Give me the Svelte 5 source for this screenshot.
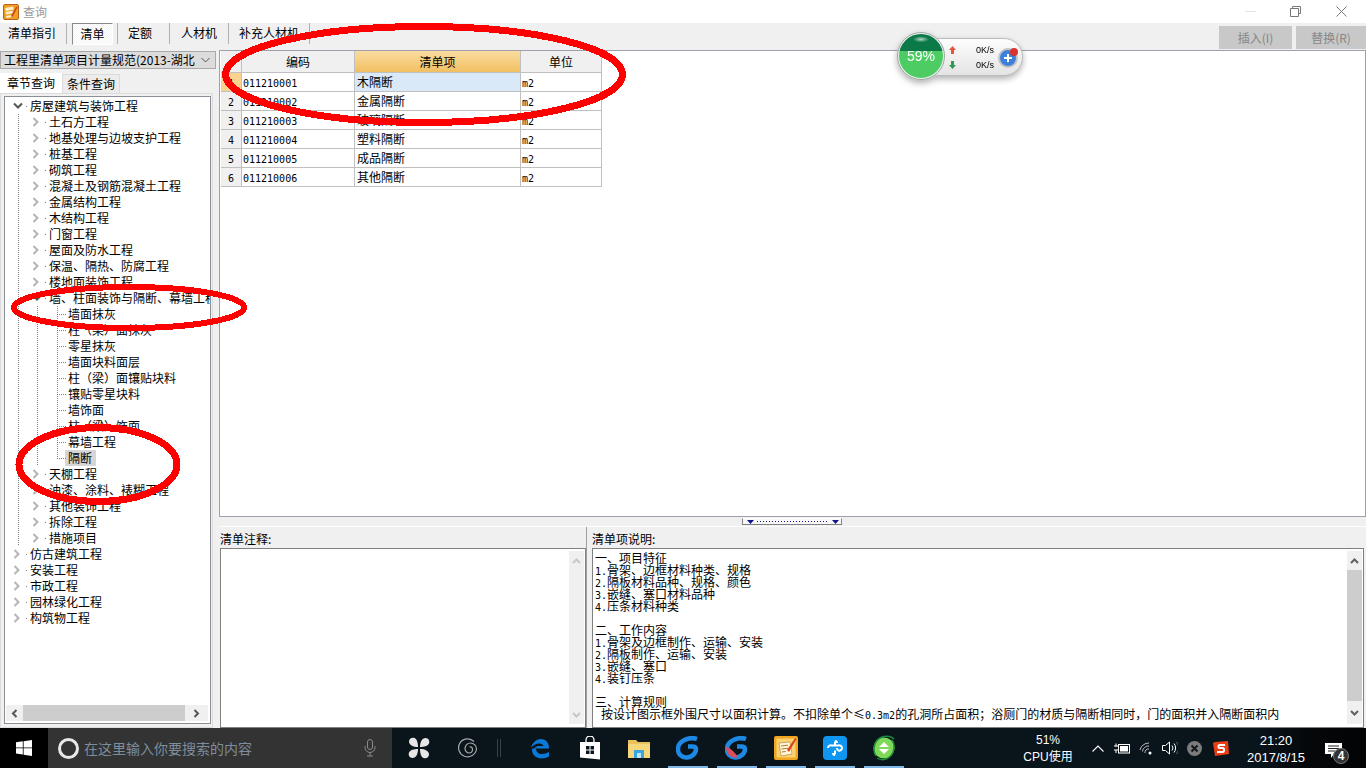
<script>
  const tree = [
    { t: '房屋建筑与装饰工程', l: 0, o: 1, g: [] },
    ...['土石方工程','地基处理与边坡支护工程','桩基工程','砌筑工程','混凝土及钢筋混凝土工程','金属结构工程','木结构工程','门窗工程','屋面及防水工程','保温、隔热、防腐工程','楼地面装饰工程'].map(t => ({ t, l: 1, g: [1] })),
    { t: '墙、柱面装饰与隔断、幕墙工程', l: 1, o: 1, g: [1] },
    ...['墙面抹灰','柱（梁）面抹灰','零星抹灰','墙面块料面层','柱（梁）面镶贴块料','镶贴零星块料','墙饰面','柱（梁）饰面','幕墙工程'].map(t => ({ t, l: 2, leaf: 1, g: [1, 1] })),
    { t: '隔断', l: 2, leaf: 1, last: 1, sel: 1, g: [1, 1] },
    ...['天棚工程','油漆、涂料、裱糊工程','其他装饰工程','拆除工程','措施项目'].map(t => ({ t, l: 1, g: [1] })),
    ...['仿古建筑工程','安装工程','市政工程','园林绿化工程','构筑物工程'].map(t => ({ t, l: 0, g: [] }))
  ];
  const rows = [
    ['011210001', '木隔断'], ['011210002', '金属隔断'], ['011210003', '玻璃隔断'],
    ['011210004', '塑料隔断'], ['011210005', '成品隔断'], ['011210006', '其他隔断']
  ];
  const desc = [
    ['', '一、项目特征'], ['1.', '骨架、边框材料种类、规格'], ['2.', '隔板材料品种、规格、颜色'], ['3.', '嵌缝、塞口材料品种'], ['4.', '压条材料种类'], ['', ''],
    ['', '二、工作内容'], ['1.', '骨架及边框制作、运输、安装'], ['2.', '隔板制作、运输、安装'], ['3.', '嵌缝、塞口'], ['4.', '装钉压条'], ['', ''],
    ['', '三、计算规则']
  ];
</script>

<div class="app">
  <header class="title">
    <svg class="appicon" viewBox="0 0 16 16" width="16" height="16">
      <rect x="0.5" y="0.5" width="15" height="15" rx="1.500" fill="#f0a020" stroke="#b8601c"/>
      <path d="M2 4l8-1.500.8 3-8 1.500zM2.500 8l7-1.300.6 2.600-7 1.300zM3 12l5.500-1 .4 2-5.500 1z" fill="#fff1cf"/>
      <path d="M8 12l5.300-9.500 1.200.8-5 9.700z" fill="#cf3d1b"/>
    </svg>
    <span class="title-text">查询</span>
    <div class="winctl">
      <svg width="11" height="11" viewBox="0 0 11 11" class="min"><path d="M0 5.500h11" stroke="#e4e4e4"/></svg>
      <svg width="11" height="11" viewBox="0 0 11 11" class="rest"><path d="M2.500 2.500V.5h8v7h-2M.5 2.500h8v8h-8z" fill="none" stroke="#777"/></svg>
      <svg width="11" height="11" viewBox="0 0 11 11" class="close"><path d="M.5.5l10 10M10.500.5l-10 10" stroke="#777"/></svg>
    </div>
  </header>

  <nav class="toolbar">
    <span class="tb first">清单指引</span>
    <span class="tb pressed">清单</span>
    <span class="tb ding">定额</span>
    <span class="tb ren">人材机</span>
    <span class="tb bu">补充人材机</span>
    <div class="actions">
      <button class="act a1">插入(I)</button>
      <button class="act a2">替换(R)</button>
    </div>
  </nav>

  <div class="body">
    <aside class="left">
      <div class="combo">
        <span>工程里清单项目计量规范(2013-湖北</span>
        <svg width="9" height="6" viewBox="0 0 9 6"><path d="M.5 1l4 4 4-4" fill="none" stroke="#555" stroke-width="1"/></svg>
      </div>
      <div class="tabs">
        <span class="tab active">章节查询</span>
        <span class="tab">条件查询</span>
      </div>
      <div class="pane">
        <div class="tree">
          <div class="tree-rows">
            {#each tree as n}
              <div class="row">
                {#each n.g as _, i}
                  <span class="guide" class:g2={i === 1}></span>
                {/each}
                {#if n.leaf}
                  <span class="twisty leaf" class:last={n.last}></span>
                {:else}
                  <span class="twisty">
                    {#if n.o}
                      <svg width="10" height="8" viewBox="0 0 10 8"><path d="M1 1.500l4 4 4-4" fill="none" stroke="#555" stroke-width="2"/></svg>
                    {:else}
                      <svg width="8" height="10" viewBox="0 0 8 10"><path d="M1.500 1l4 4-4 4" fill="none" stroke="#b5b5b5" stroke-width="2"/></svg>
                    {/if}
                    <i class="dot"></i>
                  </span>
                {/if}
                <span class="label" class:sel={n.sel}>{n.t}</span>
              </div>
            {/each}
          </div>
          <div class="hbar">
            <span class="harrow"><svg width="7" height="9" viewBox="0 0 7 9"><path d="M5.500 1L2 4.500 5.500 8" fill="none" stroke="#555" stroke-width="2"/></svg></span>
            <span class="hthumb"></span>
            <span class="harrow r"><svg width="7" height="9" viewBox="0 0 7 9"><path d="M1.500 1L5 4.500 1.500 8" fill="none" stroke="#555" stroke-width="2"/></svg></span>
          </div>
        </div>
      </div>
    </aside>

    <main class="right">
      <section class="gridbox">
        <div class="grid">
          <div class="h corner"></div>
          <div class="h">编码</div>
          <div class="h hot">清单项</div>
          <div class="h">单位</div>
          {#each rows as r, i}
            <div class="rh" class:cur={i === 0}><span class="mono">{i + 1}</span></div>
            <div class="c"><span class="mono">{r[0]}</span></div>
            <div class="c cn" class:picked={i === 0}>{r[1]}</div>
            <div class="c"><span class="mono">m2</span></div>
          {/each}
        </div>
      </section>

      <div class="splitter">
        <div class="grip">
          <svg width="7" height="4" viewBox="0 0 7 4"><path d="M0 0h7L3.500 4z" fill="#14148c"/></svg>
          <span class="dots"></span>
          <svg width="7" height="4" viewBox="0 0 7 4"><path d="M0 0h7L3.500 4z" fill="#14148c"/></svg>
        </div>
      </div>

      <div class="bottom">
        <section class="note">
          <div class="cap">清单注释:</div>
          <div class="box">
            <div class="fill"></div>
            <div class="vbar dis">
              <span class="va"><svg width="9" height="6" viewBox="0 0 9 6"><path d="M1 5l3.500-3.500L8 5" fill="none" stroke="#c8c8c8" stroke-width="2"/></svg></span>
              <span class="vmid"></span>
              <span class="va"><svg width="9" height="6" viewBox="0 0 9 6"><path d="M1 1l3.500 3.500L8 1" fill="none" stroke="#c8c8c8" stroke-width="2"/></svg></span>
            </div>
          </div>
        </section>
        <section class="explain">
          <div class="cap">清单项说明:</div>
          <div class="box">
            <div class="fill text">
              {#each desc as d}
                <div class="line">{#if d[0]}<span class="mono">{d[0]}</span>{/if}{d[1]}</div>
              {/each}
              <div class="line rule">按设计图示框外围尺寸以面积计算。不扣除单个≤<span class="mono">0.3m2</span>的孔洞所占面积；浴厕门的材质与隔断相同时，门的面积并入隔断面积内</div>
            </div>
            <div class="vbar">
              <span class="va"><svg width="9" height="6" viewBox="0 0 9 6"><path d="M1 5l3.500-3.500L8 5" fill="none" stroke="#606060" stroke-width="2"/></svg></span>
              <span class="vthumb"></span>
              <span class="va low"><svg width="9" height="6" viewBox="0 0 9 6"><path d="M1 1l3.500 3.500L8 1" fill="none" stroke="#606060" stroke-width="2"/></svg></span>
            </div>
          </div>
        </section>
      </div>
    </main>
  </div>

  <footer class="taskbar">
    <div class="start">
      <svg width="16" height="16" viewBox="0 0 16 16"><path d="M0 2.300l6.800-1v6.200H0zM7.600 1.200L16 0v7.500H7.600zM0 8.300h6.800v6.300L0 13.600zM7.600 8.300H16V16l-8.400-1.200z" fill="#fff"/></svg>
    </div>
    <div class="search">
      <span class="cortana"></span>
      <span class="hint">在这里输入你要搜索的内容</span>
      <svg class="mic" width="12" height="18" viewBox="0 0 12 18"><rect x="3.500" y=".5" width="5" height="10" rx="2.500" fill="none" stroke="#8a8a8a"/><path d="M1 7v1.500a5 5 0 0 0 10 0V7M6 13.500V17M3 17h6" fill="none" stroke="#8a8a8a"/></svg>
    </div>
    <div class="apps">
      <span class="slot"><svg width="22" height="22" viewBox="0 0 22 22"><g fill="#e6e6e6"><path d="M10 10C5 10 1 8 1 4.500 1 1.500 4 0 6.500 1 9 2 10 6 10 10z"/><path d="M12 10c0-5 2-9 5.500-9C20.500 1 22 4 21 6.500 20 9 16 10 12 10z"/><path d="M12 12c5 0 9 2 9 5.500 0 3-3 4.500-5.500 3.500C13 20 12 16 12 12z"/><path d="M10 12c0 5-2 9-5.500 9C1.500 21 0 18 1 15.500 2 13 6 12 10 12z"/></g></svg></span>
      <span class="slot"><svg width="20" height="20" viewBox="0 0 20 20"><path d="M16 3.500A9 9 0 1 0 18.500 11c0-3.500-3-6-6-6a5.500 5.500 0 0 0-5.500 5.500c0 2.500 2 4.500 4 4.500s3.500-1.500 3.500-3.500-1.500-3-3-2.500" fill="none" stroke="#a8a8a8" stroke-width="1.200"/></svg></span>
      <span class="tsep"></span>
      <span class="slot"><svg width="20" height="22" viewBox="0 0 20 22"><path d="M2.500 11.500h15.500c.3-5.500-3-9.500-8-9.500C5 2 1 6 0 11c2-3 5-4.500 8-4.500 2.500 0 4.200 1 4.500 2.500H6.500" fill="#0a78d7"/><path d="M5 11.500c0 3.500 2.500 5.500 6 5.500 2.500 0 5-.8 7-2v4.500c-2 1.200-4.800 2-7.500 2C5 21.500 1 17.500 1 13c0-1 .3-1.500.5-1.500z" fill="#0a78d7"/></svg></span>
      <span class="slot"><svg width="22" height="24" viewBox="0 0 22 24"><path d="M7 6V4a4 4 0 0 1 8 0v2" fill="none" stroke="#fff" stroke-width="1.300"/><path d="M1 6h20v17.500l-20-2z" fill="#fff"/><path d="M7 10h3.500v3.500H7zM11.500 10H15v3.500h-3.500zM7 14.500h3.500V18H7zM11.500 14.500H15V18h-3.500z" fill="#0b1720"/></svg></span>
      <span class="slot"><svg width="22" height="20" viewBox="0 0 22 20"><path d="M0 2h8l2 2h12v16H0z" fill="#e8c05e"/><path d="M0 6h22v14H0z" fill="#f6d77b"/><path d="M6 12h10v8H6z" fill="#35a6e0"/><path d="M9 15h4v5H9z" fill="#bfe6f7"/></svg></span>
      <span class="slot on"><svg width="24" height="24" viewBox="0 0 24 24"><path d="M21 3C14 .5 3 4 2 12c-.7 6 4 10 9 9.500 5-.5 9-4 9-8.500 0-2-2-2.500-4-2.500h-4" fill="none" stroke="#1e88e5" stroke-width="4.500"/></svg></span>
      <span class="slot on"><svg width="24" height="24" viewBox="0 0 24 24"><path d="M21 3C14 .5 3 4 2 12c-.7 6 4 10 9 9.500 5-.5 9-4 9-8.500 0-2-2-2.500-4-2.500h-4" fill="none" stroke="#1e88e5" stroke-width="4.500"/><path d="M1 11c3 0 9 5 12 10.500-6 1.500-12-3-12-10.500z" fill="#d9505c"/></svg></span>
      <span class="slot on"><svg width="24" height="24" viewBox="0 0 24 24"><rect width="24" height="24" rx="2" fill="#f2a51f"/><rect x="2.500" y="2.500" width="19" height="19" fill="#fbd271"/><path d="M5 7l11-1 2 12-11 2z" fill="#fff6dc" stroke="#b07a30" stroke-width=".6"/><path d="M7 10l7-.8M7.400 13l7-.8M7.800 16l4-.5" stroke="#b07a30"/><path d="M13 14l8-12 1.500 1-7.500 13z" fill="#d8461d"/></svg></span>
      <span class="slot on"><svg width="24" height="24" viewBox="0 0 24 24"><rect width="24" height="24" rx="4" fill="#0f96f0"/><path d="M12 5.500v4M12 14.500v4M5 12c0-2 2-3 3.500-2.500H12h3.500C17 9 19 10 19 12s-2 3-3.500 2.500c-1-.3-1.500-1.500-1.500-2.500M12 5c1 0 2 .6 2 2M12 19c-1 0-2-.6-2-2" fill="none" stroke="#fff" stroke-width="2"/></svg></span>
      <span class="slot on"><svg width="24" height="26" viewBox="0 0 24 26"><circle cx="12" cy="13" r="10.500" fill="#7ed957"/><path d="M4 21C0 15 2 5 10 2c5-2 10 0 12 2" fill="none" stroke="#1d8a3c" stroke-width="1.500"/><path d="M20 5c4 6 2 16-6 19-3 1-6 1-9-1" fill="none" stroke="#1d8a3c" stroke-width="1.500"/><path d="M12 7l5 5H7zM7 14h10l-5 5z" fill="#fff"/></svg></span>
    </div>
    <div class="tray">
      <div class="cpu"><span>51%</span><span>CPU使用</span></div>
      <span class="ti"><svg width="12" height="7" viewBox="0 0 12 7"><path d="M.5 6.500L6 1l5.500 5.500" fill="none" stroke="#fff" stroke-width="1.100"/></svg></span>
      <span class="ti"><svg width="16" height="11" viewBox="0 0 16 11"><rect x="4.500" y="1.500" width="11" height="8.500" fill="none" stroke="#fff"/><rect x="6" y="3" width="8" height="5.500" fill="#fff"/><path d="M0 3h4M0 7h4M2 .5v3M2 7v3" stroke="#fff" stroke-width="1"/></svg></span>
      <span class="ti"><svg width="14" height="13" viewBox="0 0 14 13"><path d="M1 8a9 9 0 0 1 9-7M3.500 9.500a6 6 0 0 1 6.500-5.500M6 11a3.500 3.500 0 0 1 4-4" fill="none" stroke="#bdbdbd" stroke-width="1"/><circle cx="11" cy="11" r="1.500" fill="#fff"/></svg></span>
      <span class="ti"><svg width="16" height="14" viewBox="0 0 16 14"><path d="M.5 4.500h3L7.500 1v12l-4-3.500h-3z" fill="none" stroke="#fff"/><path d="M10 4.500a4 4 0 0 1 0 5M12 2.500a7 7 0 0 1 0 9" fill="none" stroke="#fff"/><path d="M14.500 1a10 10 0 0 1 0 12" fill="none" stroke="#666"/></svg></span>
      <span class="ti"><svg width="15" height="15" viewBox="0 0 15 15"><circle cx="7.500" cy="7.500" r="7.500" fill="#7c7c7c"/><path d="M4.500 4.500l6 6M10.500 4.500l-6 6" stroke="#12181c" stroke-width="2"/></svg></span>
      <span class="ti sg"><svg width="16" height="15" viewBox="0 0 16 15"><path d="M2 1l13-1 1 13-14 2-2-13z" fill="#ea3e12"/><path d="M12 4H6.500C5 4 5 7 6.500 7h3C11.500 7 11.500 11 9.500 11H4" fill="none" stroke="#fff" stroke-width="2"/></svg></span>
      <div class="clock"><span>21:20</span><span>2017/8/15</span></div>
      <span class="notif">
        <svg width="17" height="15" viewBox="0 0 17 15"><path d="M0 0h17v11h-8l-3 4v-4H0z" fill="#fff"/><path d="M3 3h11M3 5.500h11M3 8h7" stroke="#222"/></svg>
        <b>4</b>
      </span>
    </div>
  </footer>

  <div class="widget">
    <div class="ball"><span>59%</span></div>
    <div class="pill">
      <div class="speed">
        <div class="sp"><svg width="7" height="8" viewBox="0 0 7 8"><path d="M3.500 0L7 4H5v4H2V4H0z" fill="#e8543c"/></svg><span>0K/s</span></div>
        <div class="sp"><svg width="7" height="8" viewBox="0 0 7 8"><path d="M3.500 8L7 4H5V0H2v4H0z" fill="#2e9a55"/></svg><span>0K/s</span></div>
      </div>
      <span class="plus">
        <svg width="10" height="10" viewBox="0 0 10 10"><path d="M5 1v8M1 5h8" stroke="#fff" stroke-width="2"/></svg>
        <i></i>
      </span>
    </div>
  </div>

  <svg class="marks" width="1366" height="768" viewBox="0 0 1366 768" shape-rendering="crispEdges">
    <g fill="none" stroke="#ff0000">
      <ellipse cx="424" cy="74.500" rx="198.500" ry="48" stroke-width="7"/>
      <ellipse cx="129" cy="307.500" rx="115" ry="20.500" stroke-width="6"/>
      <ellipse cx="98" cy="464.500" rx="79" ry="37" stroke-width="7"/>
    </g>
  </svg>
</div>

<style>
  :global(body) { margin: 0; background: #f0f0f0; }
  .app {
    position: relative; width: 1366px; height: 768px; overflow: hidden;
    display: flex; flex-direction: column; background: #f0f0f0; color: #000;
    font: 12px/16px "Noto Sans CJK SC", "Liberation Sans", sans-serif;
  }
  .mono { font-family: "DejaVu Sans Mono", "Liberation Mono", monospace; font-size: 10px; }

  .title { height: 23px; background: #fff; display: flex; align-items: center; padding-left: 3px; flex: none; }
  .appicon { flex: none; }
  .title-text { margin-left: 4px; color: #9a9a9a; }
  .winctl { margin-left: auto; display: flex; align-items: center; }
  .winctl .min { margin-right: 34px; }
  .winctl .rest { margin-right: 35px; }
  .winctl .close { margin-right: 19px; }

  .toolbar { height: 27px; flex: none; display: flex; font-size: 12px; background: #f0f0f0; }
  .tb { height: 21px; line-height: 19px; display: block; border-right: 1px solid #b0b0b0; box-sizing: content-box; white-space: nowrap; font-size: 12px; }
  .first { padding: 0 11px 0 8px; width: 47px; }
  .pressed {
    margin-left: 5px; width: 39px; height: 20px; text-align: center; line-height: 20px;
    border: 1px solid #8a8a8a; border-right-color: #fff; border-bottom-color: #fff;
    background: repeating-conic-gradient(#f4f4f4 0 25%, #ffffff 0 50%) 0 0/2px 2px;
  }
  .ding { padding: 0 17px 0 10px; width: 24px; margin-left: 4px; border-left: 1px solid #b0b0b0; }
  .ren { padding: 0 11px; width: 36px; }
  .bu { padding: 0 12px 0 10px; width: 58px; }
  .actions { margin-left: auto; display: flex; gap: 4px; margin-top: 3px; }
  .act {
    height: 23px; border: 0; padding: 0; background: #c8c8c8; color: #868686;
    font: 12px "Noto Sans CJK SC", sans-serif;
  }
  .a1 { width: 73px; }
  .a2 { width: 70px; }

  .body { flex: 1; min-height: 0; display: flex; }
  .left { width: 219px; flex: none; display: flex; flex-direction: column; }
  .combo {
    margin-top: 1px; height: 18px; width: 216px; box-sizing: border-box;
    background: #dcdcdc; border: 1px solid #a8a8a8; padding: 0 5px 0 3px;
    display: flex; align-items: center; justify-content: space-between; white-space: nowrap;
  }
  .tabs { display: flex; margin-top: 3px; height: 21px; align-items: flex-end; }
  .tab { width: 56px; height: 18px; line-height: 18px; text-align: center; background: #ececec; border: 1px solid #dcdcdc; border-bottom: 0; box-sizing: content-box; }
  .tab.active { width: 62px; height: 20px; line-height: 20px; background: #fff; border: 0; }
  .pane { flex: 1; min-height: 0; width: 213px; border: 1px solid #dcdcdc; background: #f0f0f0; padding: 2px 1px 3px 3px; box-sizing: border-box; display: flex; }
  .tree { flex: 1; min-width: 0; background: #fff; border: 1px solid #8b9096; padding: 1px 0 0 5px; box-sizing: border-box; display: flex; flex-direction: column; overflow: hidden; }
  .tree-rows { flex: 1; min-height: 0; overflow: hidden; }
  .row { height: 16px; display: flex; white-space: nowrap; }
  .guide {
    width: 19px; flex: none; height: 16px;
    background: repeating-linear-gradient(to bottom, #808080 0 1px, transparent 1px 2px) 8px 0/1px 100% no-repeat;
  }
  .twisty { width: 20px; flex: none; height: 16px; position: relative; display: flex; align-items: center; padding-left: 3px; box-sizing: border-box; }
  .twisty .dot { position: absolute; left: 16px; top: 8px; width: 1px; height: 1px; background: #808080; }
  .leaf {
    background:
      repeating-linear-gradient(to bottom, #808080 0 1px, transparent 1px 2px) 9px 0/1px 100% no-repeat,
      repeating-linear-gradient(to right, #808080 0 1px, transparent 1px 2px) 9px 8px/9px 1px no-repeat;
  }
  .leaf.last {
    background:
      repeating-linear-gradient(to bottom, #808080 0 1px, transparent 1px 2px) 9px 0/1px 9px no-repeat,
      repeating-linear-gradient(to right, #808080 0 1px, transparent 1px 2px) 9px 8px/9px 1px no-repeat;
  }
  .label { display: block; height: 16px; line-height: 16px; }
  .label.sel { background: #d6d6d6; padding: 0 4px 0 3px; margin-left: -3px; }
  .hbar { height: 16px; margin: 0 2px 2px -4px; display: flex; background: #f0f0f0; flex: none; }
  .harrow { width: 17px; display: flex; align-items: center; justify-content: center; flex: none; }
  .harrow.r { width: 23px; }
  .hthumb { flex: 1; background: #cdcdcd; }

  .right { flex: 1; min-width: 0; display: flex; flex-direction: column; }
  .gridbox { height: 467px; flex: none; box-sizing: border-box; background: #fff; border: 1px solid #a0a0ac; padding: 0 0 0 1px; }
  .grid { display: grid; width: 381px; grid-template-columns: 21px 113px 166px 81px; grid-template-rows: 22px repeat(6, 19px); }
  .h { background: #f0f0f0; border-right: 1px solid #c0c0c0; border-bottom: 1px solid #c0c0c0; text-align: center; line-height: 21px; box-sizing: border-box; }
  .h.hot { background: linear-gradient(#f9dc9f, #f2bf62); }
  .rh { background: #f0f0f0; border-right: 1px solid #c0c0c0; border-bottom: 1px solid #c0c0c0; text-align: center; line-height: 18px; box-sizing: border-box; }
  .rh.cur { background: #fbd38f; }
  .c { border-right: 1px solid #c0c0c0; border-bottom: 1px solid #c0c0c0; padding-left: 1px; line-height: 18px; box-sizing: border-box; }
  .c.cn { padding-left: 2px; }
  .c.picked { background: #d9e9f7; }

  .splitter { height: 10px; flex: none; display: flex; justify-content: center; padding: 1px 1px 1px 0; box-sizing: border-box; background: #f0f0f0; border-bottom: 1px solid #fff; }
  .grip {
    width: 100px; height: 7px; box-sizing: border-box; background: #f8f8f8; display: flex; align-items: center; justify-content: space-between; padding: 0 2px 0 4px;
    border: 1px solid #808080; border-top-color: #fff;
  }
  .dots { flex: 1; height: 1px; margin: 0 3px; background: repeating-linear-gradient(to right, #14148c 0 1px, transparent 1px 3px); }

  .bottom { flex: 1; min-height: 0; display: flex; }
  .note { width: 368px; flex: none; display: flex; flex-direction: column; padding-left: 1px; box-sizing: border-box; border-right: 1px solid #a0a0a0; }
  .explain { flex: 1; min-width: 0; display: flex; flex-direction: column; padding: 0 2px 0 5px; }
  .cap { height: 21px; line-height: 24px; flex: none; white-space: nowrap; }
  .box { flex: 1; min-height: 0; display: flex; background: #fff; border: 1px solid #808080; box-sizing: border-box; }
  .fill { flex: 1; min-width: 0; }
  .vbar { width: 15px; flex: none; margin: 2px 1px 3px 0; display: flex; flex-direction: column; background: #f0f0f0; }
  .va { height: 19px; flex: none; display: flex; align-items: center; justify-content: center; }
  .va.low { height: 23px; }
  .vmid { flex: 1; }
  .vthumb { flex: 1; background: #cdcdcd; }
  .text { padding: 3px 0 0 2px; overflow: hidden; }
  .line { height: 12px; line-height: 12px; white-space: nowrap; }
  .line.rule { padding-left: 6px; }

  .taskbar { height: 40px; flex: none; display: flex; background: linear-gradient(to right, #0a141b 0 92%, #050709 96%, #020304); color: #fff; }
  .start { width: 48px; flex: none; background: #000; display: flex; align-items: center; justify-content: center; }
  .search { width: 344px; flex: none; background: #333; display: flex; align-items: center; padding-left: 10px; box-sizing: border-box; }
  .cortana { width: 15px; height: 15px; border: 3px solid #e8e8e8; border-radius: 50%; flex: none; }
  .hint { margin-left: 5px; font-size: 14px; color: #7e8d9b; white-space: nowrap; }
  .mic { margin-left: 112px; }
  .apps { display: flex; margin-left: 2px; height: 40px; flex: none; }
  .slot { width: 49px; height: 40px; display: flex; align-items: center; justify-content: center; position: relative; }
  .slot.on::after { content: ""; position: absolute; left: 5px; right: 4px; bottom: 0; height: 2px; background: #7fb8e8; }
  .tsep { width: 24px; flex: none; background: linear-gradient(#3a4248, #3a4248) 5px 11px/1px 18px no-repeat, linear-gradient(#3a4248, #3a4248) 8px 11px/1px 18px no-repeat; }
  .tray { margin-left: auto; display: flex; height: 40px; align-items: center; padding-right: 4px; }
  .cpu, .clock { display: flex; flex-direction: column; align-items: center; line-height: 17px; padding-top: 1px; white-space: nowrap; font-family: "Liberation Sans", "Noto Sans CJK SC", sans-serif; }
  .cpu { width: 70px; margin-right: 3px; font-size: 12px; }
  .ti { width: 24px; display: flex; align-items: center; justify-content: center; }
  .ti.sg { width: 30px; }
  .clock { width: 80px; font-size: 13px; }
  .notif { width: 46px; height: 40px; position: relative; display: flex; padding: 15px 0 0 9px; box-sizing: border-box; }
  .notif b { position: absolute; left: 17px; top: 20px; width: 16px; height: 16px; border-radius: 50%; background: #333; border: 1px solid #777; box-sizing: border-box; text-align: center; font: bold 12px/14px "Liberation Sans", sans-serif; }

  .widget { position: absolute; left: 897px; top: 32px; width: 127px; height: 50px; display: flex; filter: drop-shadow(0 3px 3px rgba(0,0,0,.3)); }
  .ball {
    position: relative; z-index: 1; flex: none; width: 48px; height: 48px; border-radius: 50%; box-sizing: border-box;
    border: 2px solid #eef2ef; outline: 1px solid #9aa69f; outline-offset: -1px;
    background: radial-gradient(ellipse 8px 3px at 50% 12%, rgba(255,255,255,.7), transparent), linear-gradient(#0b7a48 0 38%, #4ccc63 38%);
    color: #fff; font: 14px/44px "Liberation Sans", sans-serif; text-align: center;
  }
  .pill {
    margin: 6px 0 0 -24px; width: 102px; height: 38px; box-sizing: border-box; padding-left: 27px;
    border: 1px solid #bcbcbc; border-radius: 0 19px 19px 0;
    background: linear-gradient(#fdfdfd, #e4e4e4); display: flex; align-items: center;
  }
  .speed { width: 45px; flex: none; display: flex; flex-direction: column; gap: 1px; margin-top: 1px; }
  .sp { height: 14px; display: flex; align-items: center; justify-content: space-between; font: 9px "Liberation Sans", sans-serif; }
  .plus { position: relative; margin-left: 4px; width: 16px; height: 16px; border-radius: 50%; background: #3d7fdc; border: 2px solid #c3c3c3; display: flex; align-items: center; justify-content: center; margin-top: 2px; }
  .plus i { position: absolute; right: -2px; top: -2px; width: 8px; height: 8px; border-radius: 50%; background: #d8332f; }

  .marks { position: absolute; left: 0; top: 0; pointer-events: none; }
</style>
